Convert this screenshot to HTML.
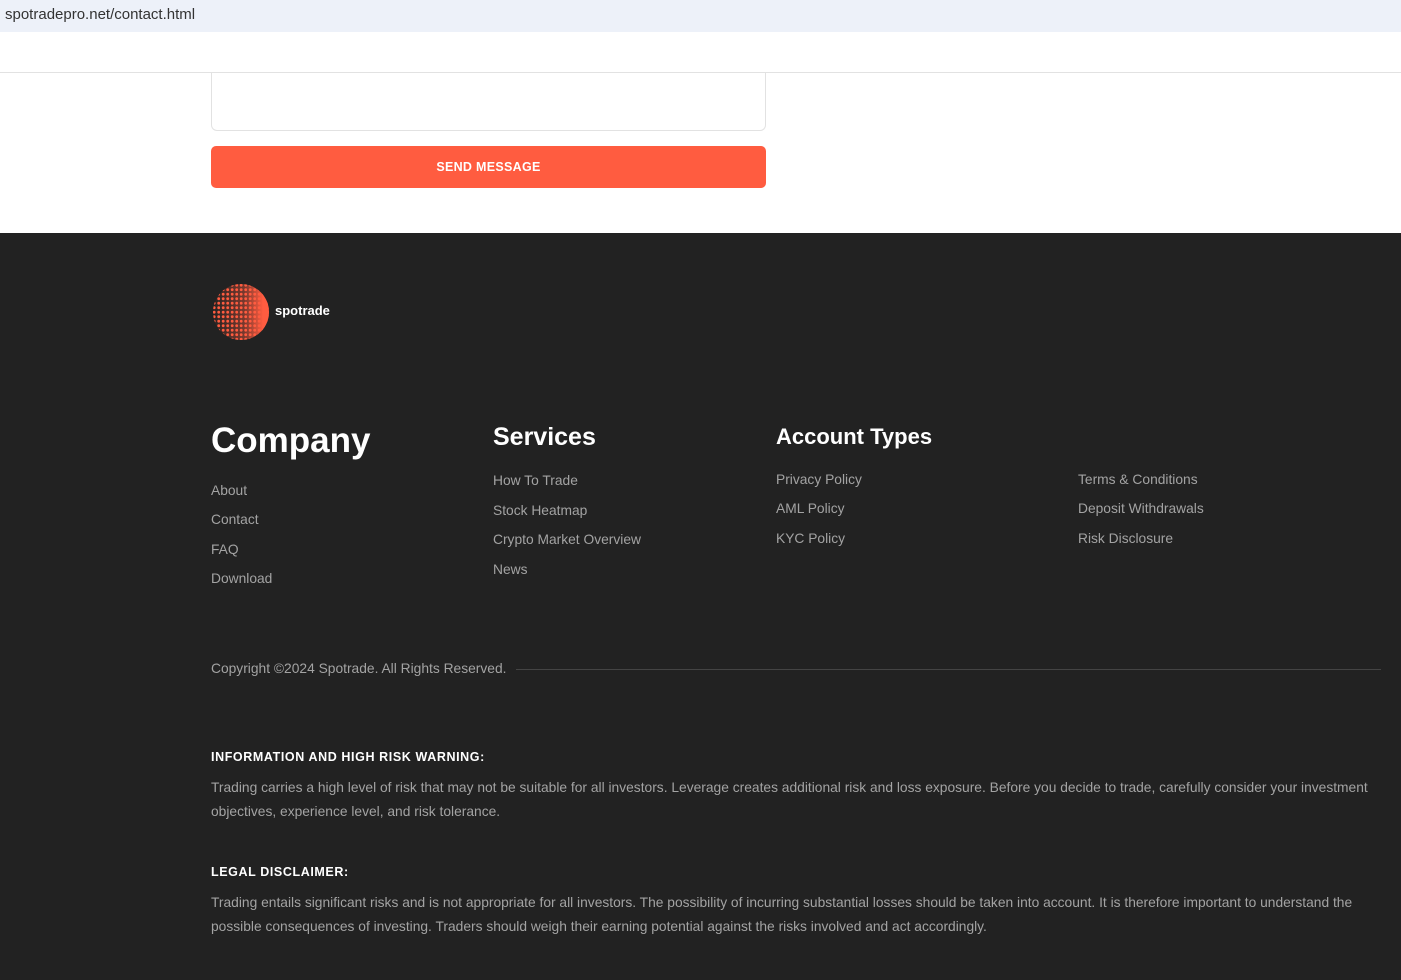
<!DOCTYPE html>
<html><head><meta charset="utf-8"><style>
*{margin:0;padding:0;box-sizing:border-box}
body{width:1401px;height:980px;overflow:hidden;font-family:"Liberation Sans",sans-serif;background:#fff;position:relative}
.a{position:absolute;white-space:nowrap}
.bar{left:0;top:0;width:1401px;height:32px;background:#edf1f9;color:#333;font-size:15px;line-height:30px;padding-left:5px}
.nav{left:0;top:32px;width:1401px;height:41px;border-bottom:1px solid #e2e2e2;background:#fff}
.ta{left:211px;top:73px;width:555px;height:58px;border:1px solid #e2e2e2;border-top:none;border-radius:0 0 6px 6px}
.btn{left:211px;top:146px;width:555px;height:42px;background:#ff5c40;border-radius:5px;color:#fff;font-size:12.5px;font-weight:bold;text-align:center;line-height:42px;letter-spacing:.3px}
.foot{left:0;top:233px;width:1401px;height:747px;background:#222}
.l{color:#a3a3a3;font-size:13.8px}
h2{position:absolute;color:#fff;font-weight:bold;white-space:nowrap}
.w{color:#fff;font-size:12.5px;font-weight:bold;letter-spacing:.6px}
.p{color:#a3a3a3;font-size:13.8px;line-height:24px;white-space:normal;width:1175px}
</style></head><body>
<div class="a bar">spotradepro.net/contact.html</div>
<div class="a nav"></div>
<div class="a ta"></div>
<div class="a btn">SEND MESSAGE</div>
<div class="a foot"></div>
<svg class="a" style="left:212px;top:283px" width="60" height="60" viewBox="0 0 60 60">
<defs>
<linearGradient id="g" x1="0" x2="1"><stop offset="0" stop-color="#ff5c40" stop-opacity="0"/><stop offset=".55" stop-color="#ff5c40" stop-opacity=".4"/><stop offset=".85" stop-color="#ff5c40"/></linearGradient>
<pattern id="d" width="4.5" height="4.5" patternUnits="userSpaceOnUse"><circle cx="2.2" cy="2.2" r="1.4" fill="#ff5c40"/></pattern>
<clipPath id="c"><circle cx="29" cy="29" r="28"/></clipPath>
</defs>
<g clip-path="url(#c)"><rect width="60" height="60" fill="url(#d)"/><rect width="60" height="60" fill="url(#g)"/></g>
</svg>
<div class="a" style="left:275px;top:303px;color:#fff;font-size:13px;font-weight:bold">spotrade</div>
<h2 style="left:211px;top:421px;font-size:35px">Company</h2>
<h2 style="left:493px;top:423px;font-size:25px">Services</h2>
<h2 style="left:776px;top:424px;font-size:22px">Account Types</h2>
<div class="a l" style="left:211px;top:483px">About</div>
<div class="a l" style="left:211px;top:512px">Contact</div>
<div class="a l" style="left:211px;top:542px">FAQ</div>
<div class="a l" style="left:211px;top:571px">Download</div>
<div class="a l" style="left:493px;top:473px">How To Trade</div>
<div class="a l" style="left:493px;top:503px">Stock Heatmap</div>
<div class="a l" style="left:493px;top:532px">Crypto Market Overview</div>
<div class="a l" style="left:493px;top:562px">News</div>
<div class="a l" style="left:776px;top:472px">Privacy Policy</div>
<div class="a l" style="left:776px;top:501px">AML Policy</div>
<div class="a l" style="left:776px;top:531px">KYC Policy</div>
<div class="a l" style="left:1078px;top:472px">Terms &amp; Conditions</div>
<div class="a l" style="left:1078px;top:501px">Deposit Withdrawals</div>
<div class="a l" style="left:1078px;top:531px">Risk Disclosure</div>
<div class="a l" style="left:211px;top:661px">Copyright ©2024 Spotrade. All Rights Reserved.</div>
<div class="a" style="left:516px;top:669px;width:865px;height:1px;background:#444"></div>
<div class="a w" style="left:211px;top:750px">INFORMATION AND HIGH RISK WARNING:</div>
<div class="a p" style="left:211px;top:776px">Trading carries a high level of risk that may not be suitable for all investors. Leverage creates additional risk and loss exposure. Before you decide to trade, carefully consider your investment objectives, experience level, and risk tolerance.</div>
<div class="a w" style="left:211px;top:865px">LEGAL DISCLAIMER:</div>
<div class="a p" style="left:211px;top:891px">Trading entails significant risks and is not appropriate for all investors. The possibility of incurring substantial losses should be taken into account. It is therefore important to understand the possible consequences of investing. Traders should weigh their earning potential against the risks involved and act accordingly.</div>
</body></html>
